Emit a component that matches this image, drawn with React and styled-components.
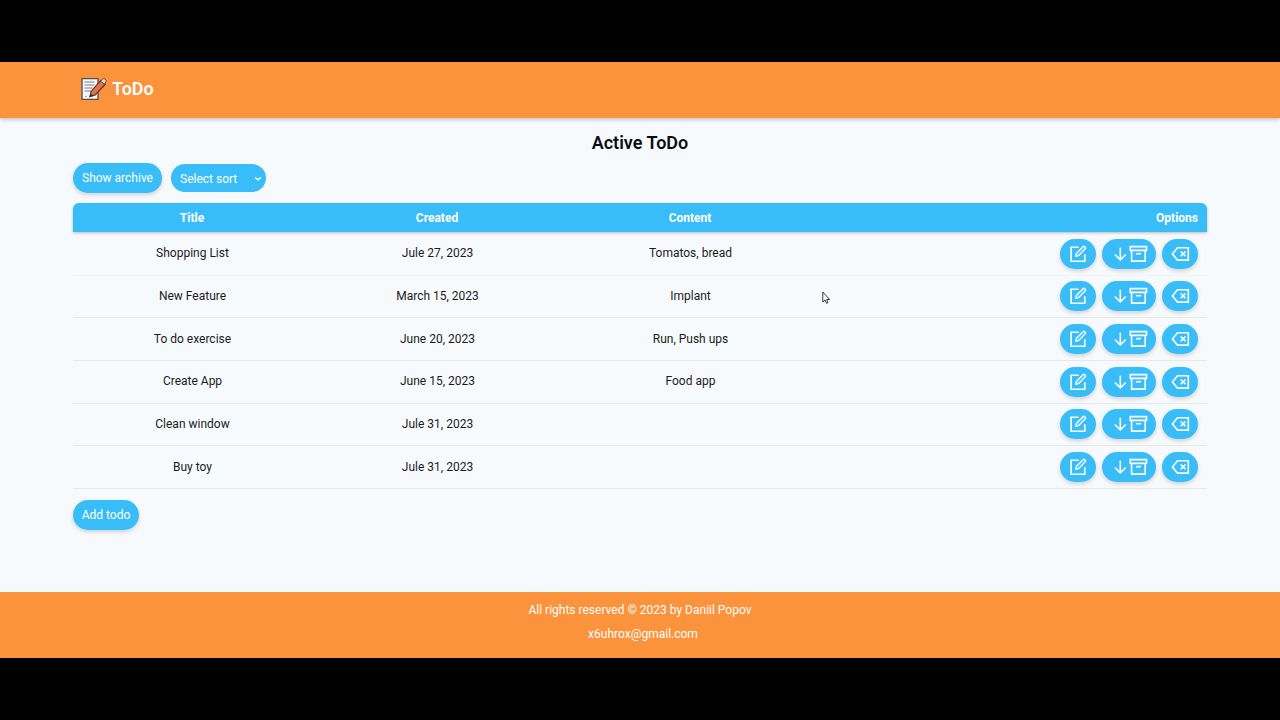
import React from "react";
import styled, { createGlobalStyle } from "styled-components";

const GlobalStyle = createGlobalStyle`
  * { box-sizing: border-box; }
  body { margin: 0; background: #000; font-family: Roboto, sans-serif; font-size: 12px; color: #1b1b1b; }
  button { font: inherit; border: 0; }
`;

const Screen = styled.div`
  height: 720px;
  padding: 62px 0;
  background: #000;
`;
const Page = styled.div`
  height: 596px;
  display: flex;
  flex-direction: column;
  background: #f7fafc;
`;
const Header = styled.header`
  height: 56px;
  flex: none;
  display: flex;
  align-items: center;
  gap: 5px;
  padding: 0 80px 2px;
  background: #fb923c;
  box-shadow: 0 2px 4px rgba(0, 0, 0, 0.2);
`;
const Brand = styled.span`
  color: #fff;
  font-size: 17.9px;
  font-weight: 600;
  line-height: 24px;
`;
const Main = styled.main`
  flex: 1;
  padding: 12px 73px 0;
`;
const Heading = styled.h1`
  margin: 0;
  font-size: 18px;
  line-height: 25px;
  font-weight: 600;
  text-align: center;
  color: #0c0c10;
`;
const Toolbar = styled.div`
  display: flex;
  align-items: center;
  gap: 9px;
  height: 30px;
  margin-top: 8px;
`;
const Pill = styled.button`
  display: inline-flex;
  align-items: center;
  justify-content: center;
  width: ${(p) => p.$w}px;
  height: ${(p) => p.$h || 30}px;
  padding: 0;
  border-radius: 15px;
  background: #38bdf8;
  color: #fff;
  box-shadow: 0 2px 4px rgba(0, 0, 0, 0.16);
`;
const SortSelect = styled(Pill)`
  justify-content: space-between;
  padding: 1px 4px 0 9px;
  box-shadow: none;
`;
const Table = styled.div`
  margin-top: 10px;
`;
const Row = styled.div`
  display: grid;
  grid-template-columns: 238px 252px 254px 1fr;
  align-items: center;
  height: 42.67px;
  border-bottom: 1px solid ${(p) => (p.$faint ? "#f1f3f5" : "#e6e8eb")};
  text-align: center;
`;
const HeadRow = styled(Row)`
  height: 29px;
  margin-bottom: 1px;
  border: 0;
  border-radius: 6px 6px 0 0;
  background: #38bdf8;
  color: #fff;
  font-weight: 700;
  box-shadow: 0 1px 3px rgba(0, 0, 0, 0.25);
`;
const Cell = styled.span`
  padding: 0 0 1px 1px;
`;
const Options = styled.div`
  display: flex;
  justify-content: flex-end;
  gap: 6px;
  padding-right: 9px;
`;
const AddBar = styled.div`
  margin-top: 11px;
`;
const Footer = styled.footer`
  height: 66px;
  flex: none;
  padding-top: 6px;
  background: #fb923c;
  color: #fff;
  text-align: center;
  line-height: 24px;
`;
const Email = styled.div`
  padding-left: 6px;
`;
const Icon = styled.svg.attrs({ width: 18, height: 18, viewBox: "0 0 18 18" })`
  display: block;
  flex: none;
  overflow: visible;
  fill: none;
  stroke: #fff;
  stroke-width: 1.6;
`;
const Cursor = styled.svg`
  position: absolute;
  left: 822px;
  top: 291px;
`;

const todos = [
  ["Shopping List", "Jule 27, 2023", "Tomatos, bread"],
  ["New Feature", "March 15, 2023", "Implant"],
  ["To do exercise", "June 20, 2023", "Run, Push ups"],
  ["Create App", "June 15, 2023", "Food app"],
  ["Clean window", "Jule 31, 2023", ""],
  ["Buy toy", "Jule 31, 2023", ""],
];

const EditIcon = () => (
  <Icon>
    <path d="M9.6 2.300H2.100V16.200H15.800V9.200" />
    <path d="M6.900 11.300l.5-2.900 6.700-6.700q.8-.8 1.700 0l.4.4q.8.9 0 1.700L9.600 10.600z" strokeWidth="1.400" strokeLinejoin="round" />
  </Icon>
);
const ArrowIcon = () => (
  <Icon><path d="M9.300 2.700v12M3.800 9.500l5.500 5.400 5.500-5.400" /></Icon>
);
const ArchiveIcon = () => (
  <Icon>
    <path d="M1.300 1.600h16.200v3.800H1.300zM2.600 5.500v10.600h13.600V5.500" />
    <path d="M6.900 8.700h5" />
  </Icon>
);
const DeleteIcon = () => (
  <Icon>
    <path d="M1.400 8.900l5.100-6.100h10.800v12.300H6.500z" />
    <path d="M9.700 6.500l4.800 4.800M14.500 6.500l-4.800 4.800" />
  </Icon>
);

function Memo() {
  return (
    <svg width="27" height="24" viewBox="0 0 27 24">
      <path d="M2 1.700h16v20.600H2z" fill="#f4f6f7" stroke="#55504e" strokeWidth="1.300" />
      <path d="M4.500 5h10M4.500 8h10M4.500 11h8M4.500 14h6.500" stroke="#7f8387" strokeWidth="1.200" />
      <path d="M5 19.500h2" stroke="#a8a8a8" />
      <path d="M10 19.500l1.200-5.300L20.900 3.400l4.400 3.800L15.200 17.900z" fill="#e8714c" stroke="#54382f" strokeWidth="1.200" />
      <path d="M20.600 4.200l2.100-2.200q1.100-1 2.600.2t.6 2.800L24.200 7.200z" fill="#ecd6bd" stroke="#54453c" strokeWidth="0.900" />
      <path d="M9.300 20.300l1.300-3.900 2.700 2.300z" fill="#333" />
    </svg>
  );
}

export default function App() {
  return (
    <Screen>
      <GlobalStyle />
      <Page>
        <Header><Memo /><Brand>ToDo</Brand></Header>
        <Main>
          <Heading>Active ToDo</Heading>
          <Toolbar>
            <Pill $w={89}>Show archive</Pill>
            <SortSelect $w={95} $h={28}>
              Select sort
              <svg width="8" height="6" viewBox="0 0 8 6" fill="none" stroke="#fff" strokeWidth="1.4"><path d="M1.200 1.500l2.800 2.400 2.800-2.400" /></svg>
            </SortSelect>
          </Toolbar>
          <Table>
            <HeadRow><span>Title</span><span>Created</span><span>Content</span><Options>Options</Options></HeadRow>
            {todos.map(([title, created, content], i) => (
              <Row key={title} $faint={i < 1}>
                <Cell>{title}</Cell><Cell>{created}</Cell><Cell>{content}</Cell>
                <Options>
                  <Pill $w={36}><EditIcon /></Pill>
                  <Pill $w={54}><ArrowIcon /><ArchiveIcon /></Pill>
                  <Pill $w={36}><DeleteIcon /></Pill>
                </Options>
              </Row>
            ))}
          </Table>
          <AddBar><Pill $w={66}>Add todo</Pill></AddBar>
        </Main>
        <Footer>
          <div>All rights reserved © 2023 by Daniil Popov</div>
          <Email>x6uhrox@gmail.com</Email>
        </Footer>
      </Page>
      <Cursor width="8" height="14" viewBox="0 0 8 14" fill="#fff" stroke="#222" strokeWidth="0.9"><path d="M.8 1v10l2.200-2 1.500 3.300 1.500-.7L4.600 8.500h3z" /></Cursor>
    </Screen>
  );
}
